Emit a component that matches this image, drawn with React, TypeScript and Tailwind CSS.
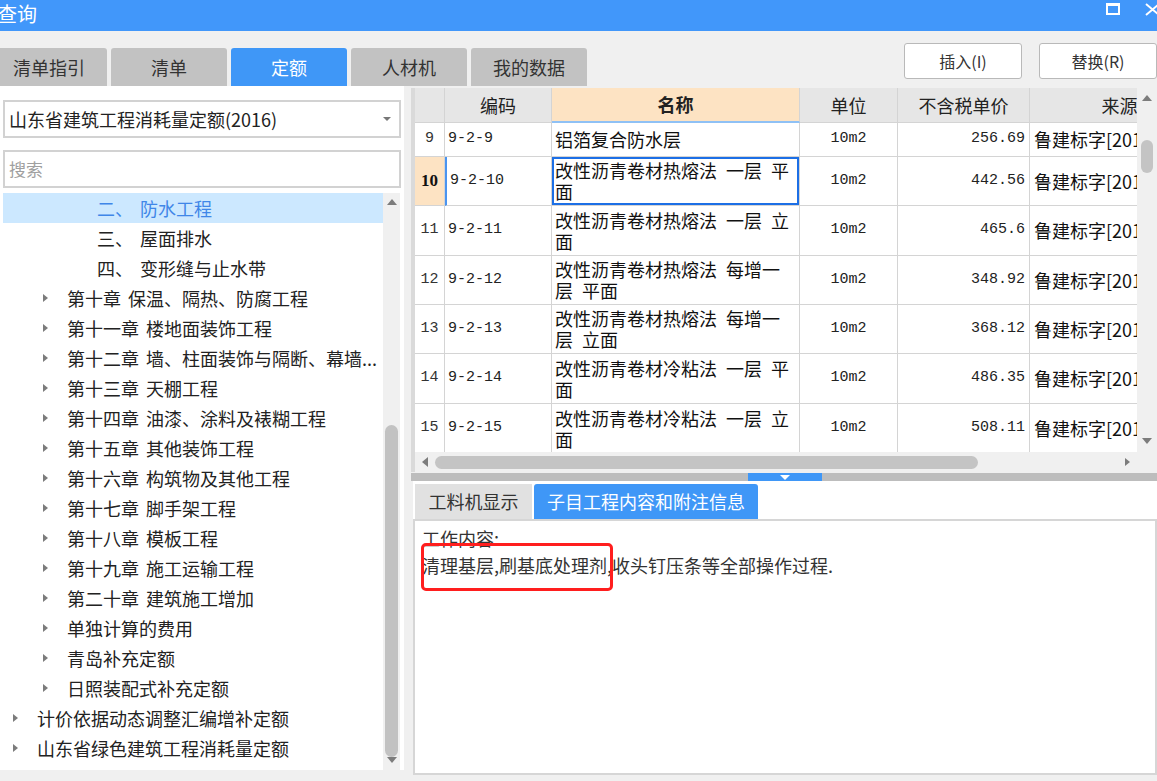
import React from "react";

type TreeItem = { lvl: number; a: string; b?: string; sel?: boolean };

const tree: TreeItem[] = [
  { lvl: 3, a: "二、", b: "防水工程", sel: true },
  { lvl: 3, a: "三、", b: "屋面排水" },
  { lvl: 3, a: "四、", b: "变形缝与止水带" },
  { lvl: 2, a: "第十章", b: "保温、隔热、防腐工程" },
  { lvl: 2, a: "第十一章", b: "楼地面装饰工程" },
  { lvl: 2, a: "第十二章", b: "墙、柱面装饰与隔断、幕墙..." },
  { lvl: 2, a: "第十三章", b: "天棚工程" },
  { lvl: 2, a: "第十四章", b: "油漆、涂料及裱糊工程" },
  { lvl: 2, a: "第十五章", b: "其他装饰工程" },
  { lvl: 2, a: "第十六章", b: "构筑物及其他工程" },
  { lvl: 2, a: "第十七章", b: "脚手架工程" },
  { lvl: 2, a: "第十八章", b: "模板工程" },
  { lvl: 2, a: "第十九章", b: "施工运输工程" },
  { lvl: 2, a: "第二十章", b: "建筑施工增加" },
  { lvl: 2, a: "单独计算的费用" },
  { lvl: 2, a: "青岛补充定额" },
  { lvl: 2, a: "日照装配式补充定额" },
  { lvl: 1, a: "计价依据动态调整汇编增补定额" },
  { lvl: 1, a: "山东省绿色建筑工程消耗量定额" },
];

type Row = { n: string; code: string; name: string; price: string; h: string; sel?: boolean };
const E = "\u2002";
const rows: Row[] = [
  { n: "9", code: "9-2-9", name: "铝箔复合防水层", price: "256.69", h: "h-[34px]" },
  { n: "10", code: "9-2-10", name: `改性沥青卷材热熔法${E}一层${E}平面`, price: "442.56", h: "h-[49px]", sel: true },
  { n: "11", code: "9-2-11", name: `改性沥青卷材热熔法${E}一层${E}立面`, price: "465.6", h: "h-[50px]" },
  { n: "12", code: "9-2-12", name: `改性沥青卷材热熔法${E}每增一层${E}平面`, price: "348.92", h: "h-[49px]" },
  { n: "13", code: "9-2-13", name: `改性沥青卷材热熔法${E}每增一层${E}立面`, price: "368.12", h: "h-[49px]" },
  { n: "14", code: "9-2-14", name: `改性沥青卷材冷粘法${E}一层${E}平面`, price: "486.35", h: "h-[50px]" },
  { n: "15", code: "9-2-15", name: `改性沥青卷材冷粘法${E}一层${E}立面`, price: "508.11", h: "h-[50px]" },
];

function TriRight() {
  return <div className="w-0 h-0 border-y-[4px] border-y-transparent border-l-[5px] border-l-[#7c7c7c]" />;
}
function TriUp() {
  return <div className="w-0 h-0 border-x-[5px] border-x-transparent border-b-[6px] border-b-[#7c7c7c]" />;
}
function TriDown() {
  return <div className="w-0 h-0 border-x-[5px] border-x-transparent border-t-[6px] border-t-[#7c7c7c]" />;
}
function TriLeft() {
  return <div className="w-0 h-0 border-y-[5px] border-y-transparent border-r-[6px] border-r-[#7c7c7c]" />;
}

const mono = "font-['Liberation_Mono',monospace] text-[15px]";
const cell = "border-r border-b border-[#d4d4d4] shrink-0";

export default function App() {
  return (
    <div className="w-[1157px] h-[781px] overflow-hidden bg-[#f0f0f0] flex flex-col font-['Noto_Sans_CJK_SC',sans-serif] text-[#222]">
      {/* Title bar */}
      <div className="h-[31px] shrink-0 bg-[#4197fa] flex justify-between">
        <span className="ml-[-3px] mt-[1px] text-white text-[20px] leading-[26px]">查询</span>
        <div className="flex items-start gap-[25px] pt-[3px] mr-[-3px]">
          <svg width="14" height="12" viewBox="0 0 14 12">
            <rect x="1" y="1" width="12" height="10" fill="none" stroke="white" strokeWidth="2" />
            <rect x="1" y="1" width="12" height="2" fill="white" />
          </svg>
          <svg width="15" height="13" viewBox="0 0 15 13">
            <path d="M1 1 L14 12 M14 1 L1 12" stroke="white" strokeWidth="2" />
          </svg>
        </div>
      </div>

      {/* Toolbar with tabs */}
      <div className="h-[55px] shrink-0 flex justify-between">
        <div className="flex items-end gap-[4px] ml-[-9px]">
          {["清单指引", "清单", "定额", "人材机", "我的数据"].map((t) => (
            <div
              key={t}
              className={
                "h-[38px] w-[116px] rounded-t-[3px] flex items-center justify-center text-[18px] " +
                (t === "定额" ? "bg-[#3f97f7] text-white" : "bg-[#c2c2c2] text-[#333]")
              }
            >
              {t}
            </div>
          ))}
        </div>
        <div className="flex gap-[17px] pt-[12px]">
          {["插入(I)", "替换(R)"].map((t) => (
            <div
              key={t}
              className="h-[36px] w-[118px] bg-white border border-[#b9b9b9] rounded-[3px] flex items-center justify-center text-[16px] text-[#333]"
            >
              {t}
            </div>
          ))}
        </div>
      </div>

      {/* Main */}
      <div className="flex-1 flex min-h-0">
        {/* Left panel */}
        <div className="w-[404px] h-[684px] shrink-0 bg-white flex flex-col pt-[14px]">
          <div className="mx-[3px] h-[38px] border-2 border-[#d2d2d2] flex items-center justify-between pl-[4px] pr-[8px]">
            <span className="text-[18px] text-[#222]">山东省建筑工程消耗量定额(2016)</span>
            <div className="w-0 h-0 border-x-[4px] border-x-transparent border-t-[4px] border-t-[#777]" />
          </div>
          <div className="mx-[3px] mt-[12px] h-[38px] border-2 border-[#d2d2d2] flex items-center pl-[4px]">
            <span className="text-[17px] text-[#a0a0a0]">搜索</span>
          </div>
          <div className="mt-[5px] ml-[3px] flex h-[577px]">
            <div className="w-[380px] flex flex-col">
              {tree.map((it, i) => (
                <div
                  key={i}
                  className={
                    "h-[30px] shrink-0 flex items-center text-[18px] " +
                    (it.sel ? "bg-[#cce8ff] text-[#3f86e8]" : "text-[#222]")
                  }
                  style={{ paddingLeft: 10 + 30 * (it.lvl - 1) }}
                >
                  <div className="w-[24px] shrink-0 flex items-center">{it.lvl < 3 ? <TriRight /> : null}</div>
                  <span className="whitespace-nowrap">
                    {it.a}
                    {it.b ? <span className="ml-[7px]">{it.b}</span> : null}
                  </span>
                </div>
              ))}
            </div>
            <div className="w-[17px] bg-[#f0f0f0] flex flex-col items-center">
              <div className="h-[17px] shrink-0 flex items-center justify-center">
                <TriUp />
              </div>
              <div className="h-[215px] shrink-0" />
              <div className="w-[13px] h-[332px] rounded-full bg-[#c2c2c2]" />
              <div className="flex-1" />
              <div className="h-[13px] shrink-0 flex items-start justify-center">
                <TriDown />
              </div>
            </div>
          </div>
        </div>

        {/* Right column */}
        <div className="ml-[7px] w-[746px] flex flex-col pt-[2px]">
          <div className="border-l-[4px] border-[#dadada] bg-white flex flex-col">
            <div className="h-[364px] flex">
              {/* grid */}
              <div className="w-[722px] overflow-hidden flex flex-col">
                <div className="h-[35px] shrink-0 flex text-[18px] bg-[#e6e6e6]">
                  <div className={cell + " w-[30px]"} />
                  <div className={cell + " w-[107px] flex items-center justify-center"}>编码</div>
                  <div className="w-[248px] shrink-0 border-r border-b-2 border-r-[#d4d4d4] border-b-[#8fc1f5] bg-[#fde3c3] flex items-center justify-center font-bold">
                    名称
                  </div>
                  <div className={cell + " w-[98px] flex items-center justify-center"}>单位</div>
                  <div className={cell + " w-[132px] flex items-center justify-center"}>不含税单价</div>
                  <div className={cell + " w-[180px] flex items-center justify-center"}>来源</div>
                </div>
                <div className="flex-1 overflow-hidden">
                  {rows.map((r) => (
                    <div key={r.n} className={"flex shrink-0 " + r.h}>
                      <div
                        className={
                          cell +
                          " w-[30px] flex items-center justify-center " +
                          (r.sel
                            ? "bg-[#fde3c3] font-['Liberation_Serif',serif] font-bold text-[17px] text-[#111]"
                            : mono + " text-[#333]")
                        }
                      >
                        {r.n}
                      </div>
                      <div
                        className={
                          cell +
                          " w-[107px] flex items-center pl-[3px] " +
                          mono +
                          (r.sel ? " border-l-2 border-l-[#4a94f0]" : "")
                        }
                      >
                        {r.code}
                      </div>
                      <div
                        className={
                          cell +
                          " w-[248px] flex items-center pl-[3px] pr-[5px] text-[18px] leading-[21px] text-[#111] " +
                          (r.sel ? "shadow-[inset_0_0_0_2px_#1c6fe6]" : "")
                        }
                      >
                        <span>{r.name}</span>
                      </div>
                      <div className={cell + " w-[98px] flex items-center justify-center " + mono}>10m2</div>
                      <div className={cell + " w-[132px] flex items-center justify-end pr-[4px] " + mono}>{r.price}</div>
                      <div className={cell + " w-[180px] flex items-center pl-[4px] text-[18px] whitespace-nowrap text-[#111]"}>
                        鲁建标字[2016]56号
                      </div>
                    </div>
                  ))}
                </div>
              </div>
              {/* vscroll */}
              <div className="w-[20px] bg-[#f0f0f0] flex flex-col items-center">
                <div className="h-[20px] shrink-0 flex items-center justify-center">
                  <TriUp />
                </div>
                <div className="h-[32px] shrink-0" />
                <div className="w-[12px] h-[33px] rounded-full bg-[#c4c4c4]" />
                <div className="flex-1" />
                <div className="h-[22px] shrink-0 flex items-center justify-center">
                  <TriDown />
                </div>
              </div>
            </div>
            {/* hscroll */}
            <div className="h-[20px] bg-[#f0f0f0] flex items-center">
              <div className="w-[20px] shrink-0 flex justify-center">
                <TriLeft />
              </div>
              <div className="w-[543px] h-[13px] rounded-full bg-[#c4c4c4]" />
              <div className="flex-1" />
              <div className="w-[20px] shrink-0 flex justify-center">
                <TriRight />
              </div>
              <div className="w-[20px] shrink-0" />
            </div>
          </div>

          {/* splitter */}
          <div className="mt-[1px] h-[8px] bg-[#bdbdbd] flex pl-[337px]">
            <div className="w-[74px] h-full bg-[#3f97f7] flex items-center justify-center">
              <div className="w-0 h-0 border-x-[5px] border-x-transparent border-t-[5px] border-t-white" />
            </div>
          </div>

          {/* bottom panel */}
          <div className="ml-[2px] h-[294px] bg-white flex flex-col">
            <div className="h-[38px] shrink-0 flex items-end gap-[2px] pl-[2px]">
              <div className="h-[35px] w-[117px] bg-[#e1e1e1] flex items-center justify-center text-[18px] text-[#333]">
                工料机显示
              </div>
              <div className="h-[35px] w-[224px] rounded-t-[3px] bg-[#3f97f7] flex items-center justify-center text-[18px] text-white">
                子目工程内容和附注信息
              </div>
            </div>
            <div className="flex-1 relative border-2 border-[#d6d6d6] pl-[7px] pt-[4px] text-[18px] leading-[27px] text-[#333]">
              <div>工作内容:</div>
              <div>清理基层,刷基底处理剂,收头钉压条等全部操作过程.</div>
              <div className="absolute left-[6px] top-[22px] w-[192px] h-[48px] border-[3px] border-[#ff1e1e] rounded-[5px]" />
            </div>
          </div>
        </div>
      </div>
    </div>
  );
}
